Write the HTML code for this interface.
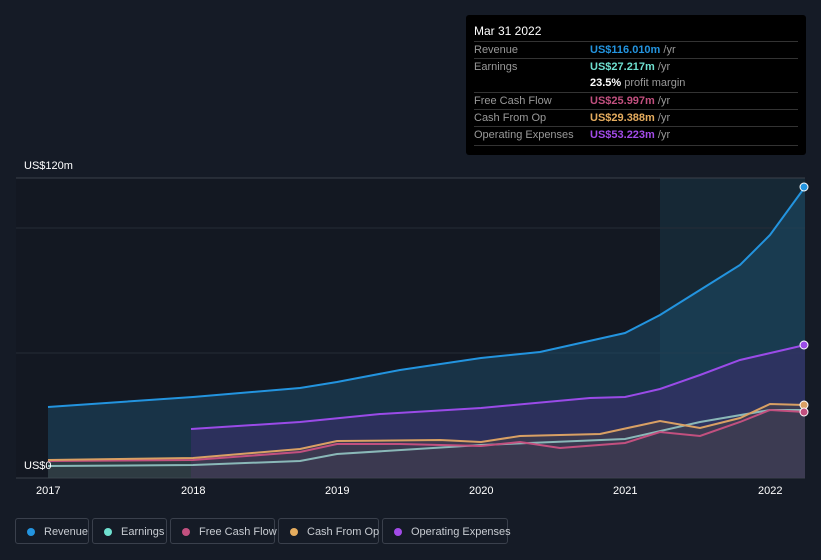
<!DOCTYPE html>
<html style="margin:0;width:821px;height:560px;overflow:hidden"><head><style>
body{margin:0;width:821px;height:560px;background:#151b26;font-family:"Liberation Sans",sans-serif;overflow:hidden;position:relative}
.tt{position:absolute;left:466px;top:15px;width:340px;height:140px;background:#000;border-radius:3px}
.tt .h{color:#fff;font-size:12px;position:absolute;left:8px;top:9px}
.row{position:absolute;left:8px;width:324px;border-top:1px solid #333;font-size:11px;color:#999;height:17px;line-height:17px;white-space:nowrap}
.row b{position:absolute;left:116px;font-weight:bold}
.row span.u{color:#999;font-weight:normal}
.lg{position:absolute;top:518px;height:26px;border:1px solid #3a404c;border-radius:3px;color:#c8ccd2;font-size:11px;line-height:26px;box-sizing:border-box;white-space:nowrap}
.lg i{position:absolute;left:11px;top:9px;width:8px;height:8px;border-radius:50%}
.lg span{position:absolute;left:28px;white-space:nowrap}
.ax{position:absolute;color:#fff;font-size:11px}
</style></head><body>
<svg width="821" height="560" style="position:absolute;left:0;top:0">
<rect x="660" y="178" width="145" height="300" fill="#17323f" opacity="0.6"/>
<rect x="16" y="178" width="644" height="300" fill="#131822"/>
<line x1="16" y1="178" x2="805" y2="178" stroke="#3a404a"/>
<line x1="16" y1="228" x2="805" y2="228" stroke="#262c36"/>
<line x1="16" y1="353" x2="805" y2="353" stroke="#262c36"/>
<line x1="16" y1="478" x2="805" y2="478" stroke="#3a404a"/>
<path d="M48,407 L193,397 L300,388 L337,382 L400,370 L481,358 L540,352 L625,333 L660,315 L700,290 L740,265 L770,235 L805,187 L805,478 L48,478Z" fill="#1d4b66" opacity="0.55"/>
<path d="M191,429 L300,422 L380,414 L481,408 L590,398 L625,397 L660,389 L700,375 L740,360 L805,345 L805,478 L191,478Z" fill="#3a2f6a" opacity="0.6"/>
<path d="M48,407 L193,397 L300,388 L337,382 L400,370 L481,358 L540,352 L625,333 L660,315 L700,290 L740,265 L770,235 L805,187" fill="none" stroke="#2394df" stroke-width="2"/>
<path d="M191,429 L300,422 L380,414 L481,408 L590,398 L625,397 L660,389 L700,375 L740,360 L805,345" fill="none" stroke="#9a4be8" stroke-width="2"/>
<path d="M48,460 L193,458 L300,449 L337,441 L440,440 L481,442 L520,436 L600,434 L660,421 L700,428 L740,418 L770,404 L805,405 L805,478 L48,478Z" fill="#5a4a3a" opacity="0.35"/>
<path d="M48,466 L193,465 L300,461 L337,454 L481,445 L625,439 L700,422 L770,410 L805,410" fill="none" stroke="#8ab8b8" stroke-width="2"/>
<path d="M48,461 L193,460 L300,452 L337,444 L400,444 L481,446 L520,442 L560,448 L625,443 L660,432 L700,436 L740,422 L770,410 L805,412" fill="none" stroke="#c2507f" stroke-width="2"/>
<path d="M48,460 L193,458 L300,449 L337,441 L440,440 L481,442 L520,436 L600,434 L660,421 L700,428 L740,418 L770,404 L805,405" fill="none" stroke="#d9a064" stroke-width="2"/>
<circle cx="804" cy="187" r="4" fill="#2394df" stroke="#fff"/>
<circle cx="804" cy="345" r="4" fill="#9a4be8" stroke="#fff"/>
<circle cx="804" cy="405" r="4" fill="#d9a064" stroke="#fff"/>
<circle cx="804" cy="412" r="4" fill="#c2507f" stroke="#fff"/>
</svg>
<div class="ax" style="left:24px;top:160px">US$120m</div>
<div class="ax" style="left:24px;top:460px">US$0</div>
<div class="ax" style="left:36px;top:485px">2017</div>
<div class="ax" style="left:181px;top:485px">2018</div>
<div class="ax" style="left:325px;top:485px">2019</div>
<div class="ax" style="left:469px;top:485px">2020</div>
<div class="ax" style="left:613px;top:485px">2021</div>
<div class="ax" style="left:758px;top:485px">2022</div>
<div class="tt">
<div class="h">Mar 31 2022</div>
<div class="row" style="top:26px">Revenue<b style="color:#2394df">US$116.010m <span class="u">/yr</span></b></div>
<div class="row" style="top:43px">Earnings<b style="color:#6fe0d0">US$27.217m <span class="u">/yr</span></b></div>
<div class="row" style="top:60px;border-top:none"><b style="color:#fff">23.5% <span class="u">profit margin</span></b></div>
<div class="row" style="top:77px">Free Cash Flow<b style="color:#c2507f">US$25.997m <span class="u">/yr</span></b></div>
<div class="row" style="top:94px">Cash From Op<b style="color:#e5ac5e">US$29.388m <span class="u">/yr</span></b></div>
<div class="row" style="top:111px">Operating Expenses<b style="color:#a24be8">US$53.223m <span class="u">/yr</span></b></div>
<div class="row" style="top:130px;height:0"></div>
</div>
<div class="lg" style="left:15px;width:74px"><i style="background:#2394df"></i><span>Revenue</span></div>
<div class="lg" style="left:92px;width:75px"><i style="background:#6fe0d0"></i><span>Earnings</span></div>
<div class="lg" style="left:170px;width:105px"><i style="background:#c2507f"></i><span>Free Cash Flow</span></div>
<div class="lg" style="left:278px;width:101px"><i style="background:#e5ac5e"></i><span>Cash From Op</span></div>
<div class="lg" style="left:382px;width:126px"><i style="background:#a24be8"></i><span>Operating Expenses</span></div>
</body></html>
